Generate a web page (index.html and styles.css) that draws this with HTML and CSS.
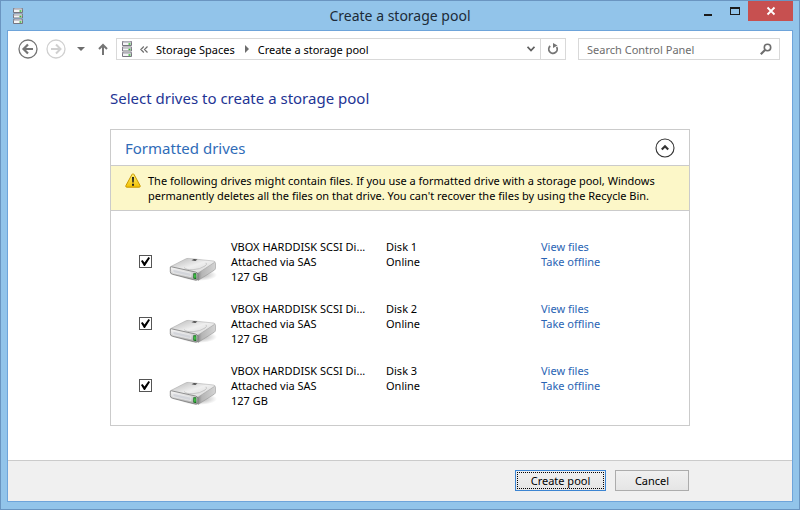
FILE: index.html
```html
<!DOCTYPE html>
<html lang="en">
<head>
    <meta charset="UTF-8">
    <meta name="viewport" content="width=device-width, initial-scale=1.0">
    <title>Create a storage pool</title>
    <link rel="stylesheet" href="styles.css">
</head>
<body>
    <!-- Shared drawings -->
    <svg class="sprite" aria-hidden="true">
        <defs>
            <linearGradient id="metal" x1="0" y1="0" x2="0" y2="1">
                <stop offset="0" stop-color="#fafafa"/>
                <stop offset="1" stop-color="#a8a8a8"/>
            </linearGradient>
            <linearGradient id="diskTop" x1="0" y1="0" x2="1" y2="1">
                <stop offset="0" stop-color="#b4b4b4"/>
                <stop offset="0.5" stop-color="#efefef"/>
                <stop offset="1" stop-color="#d2d2d2"/>
            </linearGradient>
            <linearGradient id="diskSide" x1="0" y1="0" x2="1" y2="0">
                <stop offset="0" stop-color="#777"/>
                <stop offset="0.3" stop-color="#b5b5b5"/>
                <stop offset="1" stop-color="#d4d4d4"/>
            </linearGradient>
            <linearGradient id="warn" x1="0" y1="0" x2="0" y2="1">
                <stop offset="0" stop-color="#fff27a"/>
                <stop offset="1" stop-color="#f2c000"/>
            </linearGradient>
            <radialGradient id="shade">
                <stop offset="0" stop-color="#777" stop-opacity="0.7"/>
                <stop offset="1" stop-color="#777" stop-opacity="0"/>
            </radialGradient>
        </defs>
        <symbol id="stack" viewBox="0 0 12 16">
            <g fill="#77757f">
                <rect x="1" y="0" width="10" height="5" rx="1"/>
                <rect x="1" y="5.500" width="10" height="5" rx="1"/>
                <rect x="1" y="11" width="10" height="5" rx="1"/>
            </g>
            <g fill="#c6c5cc">
                <path d="M2.500 .3h7l1 1.700h-9zM2.500 5.800h7l1 1.700h-9zM2.500 11.300h7l1 1.700h-9z"/>
            </g>
            <g fill="#f4f4f6">
                <path d="M2 2h8v2H2zM2 7.500h8v2H2zM2 13h8v2H2z"/>
            </g>
            <path fill="#35b535" d="M7.500 2.300h2v1.400h-2zM7.500 7.800h2v1.400h-2zM7.500 13.300h2v1.400h-2z"/>
        </symbol>
        <symbol id="disk" viewBox="0 0 50 28">
            <ellipse cx="30" cy="20" rx="19" ry="6" fill="url(#shade)"/>
            <path d="M28 18.500 46.500 7q1 .2 1 1.400V13q0 1.300-1.200 2.200L30 25.500z" fill="url(#diskSide)" stroke="#8d8d8d" stroke-width=".5"/>
            <path d="M2.800 11.500 17 4.200q1.800-1 3.800-.8L45.500 6q2.300.4.7 1.600L30.500 17.800q-1.400.9-3.200.7L3.200 13.200q-1.700-.5-.4-1.700z" fill="url(#diskTop)" stroke="#a2a2a2" stroke-width=".5"/>
            <path d="M16 12.500q2 2.500 9 2.200t12-3.700q2.500-1.800 1-3.200" fill="none" stroke="#bcbcbc" stroke-width=".8"/>
            <path d="m23.500 5.300 2.500-1.200 3.500.5-2.200 1.500z" fill="#4c4c4c"/>
            <path d="M3.400 11.800 27.500 17q2.300.5 2.300 2.700v3.600q0 2.300-2.200 1.900L4.500 19.300q-2.200-.5-2.200-2.600v-3.900q0-1.300 1.100-1z" fill="url(#metal)" stroke="#777" stroke-width=".8"/>
            <path d="M5 14.300 23 18.200v3.600L5 17.600z" fill="#d3d5da" stroke="#f7f7f7" stroke-width=".5"/>
            <path d="M25.300 18.200h3v6l-3-.6z" fill="#146d1e"/>
            <path d="M26.300 19.200h1.300v3.500h-1.300z" fill="#4ee050"/>
        </symbol>
    </svg>

    <div class="window">
        <header class="titlebar">
            <svg class="app-icon" width="12" height="16"><use href="#stack"/></svg>
            <h1>Create a storage pool</h1>
            <div class="window-buttons">
                <button class="win-btn" aria-label="Minimize">
                    <svg width="10" height="10"><path d="M1 8h8v2H1z" fill="#1b1b1b"/></svg>
                </button>
                <button class="win-btn" aria-label="Maximize">
                    <svg width="10" height="10"><path fill="#1b1b1b" fill-rule="evenodd" d="M0 1h10v8H0zM1 3v5h8V3z"/></svg>
                </button>
                <button class="win-btn close" aria-label="Close">
                    <svg width="10" height="10"><path d="m1.500 1.500 7 7m0-7-7 7" stroke="#fff" stroke-width="1.800"/></svg>
                </button>
            </div>
        </header>

        <div class="client">
            <nav class="navbar">
                <button class="icon-btn" aria-label="Back">
                    <svg width="20" height="20" fill="none" stroke="#757575"><circle cx="10" cy="10" r="9" stroke-width="1.300"/><path d="M15 10H6m4-4.500L5.500 10l4.500 4.500" stroke-width="2.200"/></svg>
                </button>
                <button class="icon-btn forward" aria-label="Forward" disabled>
                    <svg width="20" height="20" fill="none" stroke="#d0d0d0"><circle cx="10" cy="10" r="9" stroke-width="1.300"/><path d="M5 10h9m-4-4.500 4.500 4.500-4.500 4.500" stroke-width="2"/></svg>
                </button>
                <button class="icon-btn recent" aria-label="Recent locations">
                    <svg width="8" height="4"><path d="M0 0h8L4 4z" fill="#6d6d6d"/></svg>
                </button>
                <button class="icon-btn up" aria-label="Up">
                    <svg width="10" height="12" fill="none" stroke="#757575" stroke-width="2"><path d="M5 12V2M1 6l4-4 4 4"/></svg>
                </button>
                <div class="address">
                    <svg class="address-icon" width="12" height="16"><use href="#stack"/></svg>
                    <svg class="overflow" width="8" height="7" fill="none" stroke="#6d6d6d" stroke-width="1.200"><path d="M3.800.5.8 3.500l3 3M7.500.5l-3 3 3 3"/></svg>
                    <a href="#">Storage Spaces</a>
                    <svg class="crumb-arrow" width="4" height="8"><path d="M0 0l4 4-4 4z" fill="#6d6d6d"/></svg>
                    <a href="#">Create a storage pool</a>
                    <button class="icon-btn history" aria-label="Previous locations">
                        <svg width="8" height="6" fill="none" stroke="#606060" stroke-width="1.800"><path d="m.5.8 3.500 3.700L7.500.8"/></svg>
                    </button>
                    <button class="icon-btn refresh" aria-label="Refresh">
                        <svg width="12" height="12" fill="none" stroke="#757575" stroke-width="1.800"><path d="M3.200 3A4.200 4.200 0 1 0 9.600 4"/><path d="M6 0v5l4.500-2.400z" fill="#757575" stroke="none"/></svg>
                    </button>
                </div>
                <div class="search">
                    <input type="text" placeholder="Search Control Panel" aria-label="Search Control Panel">
                    <svg width="12" height="12" fill="none" stroke="#6d6d6d"><circle cx="7.500" cy="4.500" r="3.200" stroke-width="1.600"/><path d="M5 7 .8 11.200" stroke-width="2.200"/></svg>
                </div>
            </nav>

            <main class="content">
                <h2>Select drives to create a storage pool</h2>

                <section class="panel">
                    <div class="panel-header">
                        <h3>Formatted drives</h3>
                        <button class="icon-btn" aria-label="Collapse">
                            <svg width="20" height="20" fill="none" stroke="#333"><circle cx="10" cy="10" r="9" stroke-width="1.100"/><path d="M6.800 11.500 10 8.300l3.200 3.200" stroke-width="2.200"/></svg>
                        </button>
                    </div>
                    <div class="warning">
                        <svg width="16" height="15"><path d="M8 .8q.7 0 1.100.8l6 11q.5 1.600-.8 1.600H1.700q-1.300 0-.8-1.600l6-11Q7.300.8 8 .8z" fill="url(#warn)" stroke="#c99700"/><path d="M7 4h2l-.3 5.500H7.300zM7 10.800h2v2H7z" fill="#222"/></svg>
                        <p>The following drives might contain files. If you use a formatted drive with a storage pool, Windows permanently deletes all the files on that drive. You can't recover the files by using the Recycle Bin.</p>
                    </div>
                    <ul class="drives">
                        <li class="drive">
                            <input type="checkbox" id="disk1" checked>
                            <svg class="drive-icon" width="50" height="28"><use href="#disk"/></svg>
                            <label for="disk1">VBOX HARDDISK SCSI Di...<br>Attached via SAS<br>127 GB</label>
                            <div class="status">Disk 1<br>Online</div>
                            <div class="actions"><a href="#">View files</a><a href="#">Take offline</a></div>
                        </li>
                        <li class="drive">
                            <input type="checkbox" id="disk2" checked>
                            <svg class="drive-icon" width="50" height="28"><use href="#disk"/></svg>
                            <label for="disk2">VBOX HARDDISK SCSI Di...<br>Attached via SAS<br>127 GB</label>
                            <div class="status">Disk 2<br>Online</div>
                            <div class="actions"><a href="#">View files</a><a href="#">Take offline</a></div>
                        </li>
                        <li class="drive">
                            <input type="checkbox" id="disk3" checked>
                            <svg class="drive-icon" width="50" height="28"><use href="#disk"/></svg>
                            <label for="disk3">VBOX HARDDISK SCSI Di...<br>Attached via SAS<br>127 GB</label>
                            <div class="status">Disk 3<br>Online</div>
                            <div class="actions"><a href="#">View files</a><a href="#">Take offline</a></div>
                        </li>
                    </ul>
                </section>
            </main>

            <footer class="footer">
                <button class="btn primary">Create pool</button>
                <button class="btn">Cancel</button>
            </footer>
        </div>
    </div>
</body>
</html>
```

FILE: styles.css
```css
:root {
    --frame: #92c4ea;
    --frame-edge: #6a95c1;
    --client-edge: #6ea4da;
    --line: #cbcbcb;
    --link: #2a64b4;
}

* {
    box-sizing: border-box;
}

body {
    margin: 0;
    font-family: "Noto Sans", "Open Sans", sans-serif;
    font-size: 11px;
    line-height: 15px;
    color: #000;
}

h1, h2, h3, p, ul {
    margin: 0;
    padding: 0;
    font-weight: normal;
}

button, input {
    font: inherit;
    color: inherit;
}

svg {
    display: block;
    flex: none;
}

a {
    color: var(--link);
    text-decoration: none;
}

.sprite {
    position: absolute;
    width: 0;
    height: 0;
}

.window {
    display: flex;
    flex-direction: column;
    min-height: 100vh;
    padding: 0 6px 7px;
    background: var(--frame);
    border: 1px solid var(--frame-edge);
}

/* Title bar */
.titlebar {
    display: grid;
    grid-template-columns: 1fr auto 1fr;
    height: 29px;
}

.app-icon {
    margin: 7px 0 0 5px;
}

.titlebar h1 {
    font-size: 14px;
    line-height: 29px;
    color: #1c2b38;
}

.window-buttons {
    display: flex;
    justify-content: flex-end;
    align-items: flex-start;
}

.win-btn {
    display: flex;
    align-items: center;
    justify-content: center;
    width: 27px;
    height: 20px;
    padding: 0;
    border: 0;
    background: none;
}

.win-btn.close {
    width: 45px;
    background: #c75050;
}

.client {
    flex: 1;
    display: flex;
    flex-direction: column;
    background: #fff;
    border: 1px solid var(--client-edge);
}

/* Address row */
.navbar {
    display: flex;
    align-items: center;
    padding: 7px 12px 0 10px;
}

.icon-btn {
    display: flex;
    align-items: center;
    justify-content: center;
    padding: 0;
    border: 0;
    background: none;
}

.forward {
    margin-left: 8px;
}

.recent {
    margin-left: 11px;
}

.up {
    margin-left: 13px;
}

.address {
    flex: 1;
    display: flex;
    align-items: center;
    height: 22px;
    margin: 0 12px 0 8px;
    padding-left: 4px;
    border: 1px solid #d9d9d9;
}

.address a {
    color: #000;
}

.overflow {
    margin: 0 8px 0 7px;
}

.crumb-arrow {
    margin: 0 9px 0 10px;
}

.history {
    width: 18px;
    height: 20px;
    margin-left: auto;
}

.refresh {
    width: 25px;
    height: 20px;
    border-left: 1px solid #d9d9d9;
}

.search {
    display: flex;
    align-items: center;
    width: 202px;
    height: 22px;
    padding: 0 7px 0 8px;
    border: 1px solid #d9d9d9;
}

.search input {
    flex: 1;
    min-width: 0;
    padding: 0;
    border: 0;
    outline: none;
    background: none;
}

.search input::placeholder {
    color: #6d6d6d;
    opacity: 1;
}

/* Drive selection */
.content {
    flex: 1;
    padding: 27px 102px 24px;
}

.content h2 {
    font-size: 15px;
    line-height: 22px;
    color: #1e3494;
}

.panel {
    margin-top: 20px;
    border: 1px solid var(--line);
}

.panel-header {
    display: flex;
    align-items: center;
    justify-content: space-between;
    height: 35px;
    padding: 0 14px;
}

.panel-header h3 {
    font-size: 15px;
    line-height: 22px;
    color: #2f6cb8;
}

.warning {
    display: flex;
    gap: 7px;
    padding: 7px 14px;
    background: #fcf7c8;
    border: solid var(--line);
    border-width: 1px 0;
}

.drives {
    padding: 28px 14px 17px 28px;
    list-style: none;
}

.drive {
    display: grid;
    grid-template-columns: 29px 63px 155px 155px 1fr;
    align-items: start;
}

.drive + .drive {
    margin-top: 17px;
}

.drive input {
    appearance: none;
    align-self: center;
    width: 13px;
    height: 13px;
    margin: 0;
    border: 1px solid #555;
    background: #fff;
}

.drive input:checked::before {
    content: "";
    display: block;
    width: 11px;
    height: 11px;
    background: #000;
    clip-path: polygon(9% 45%, 23% 36%, 41% 60%, 77% 9%, 91% 18%, 45% 91%, 36% 91%);
}

.drive-icon {
    margin-top: 16px;
}

.actions a {
    display: block;
}

/* Buttons */
.footer {
    display: flex;
    justify-content: flex-end;
    gap: 9px;
    padding: 9px 103px 10px;
    background: #f0f0f0;
    border-top: 1px solid var(--line);
}

.btn {
    min-width: 74px;
    height: 21px;
    padding: 0;
    line-height: 19px;
    background: linear-gradient(#f0f0f0, #e5e5e5);
    border: 1px solid #acacac;
}

.btn.primary {
    min-width: 91px;
    border-color: #3c85d2;
    outline: 1px dotted #000;
    outline-offset: -3px;
}
```
